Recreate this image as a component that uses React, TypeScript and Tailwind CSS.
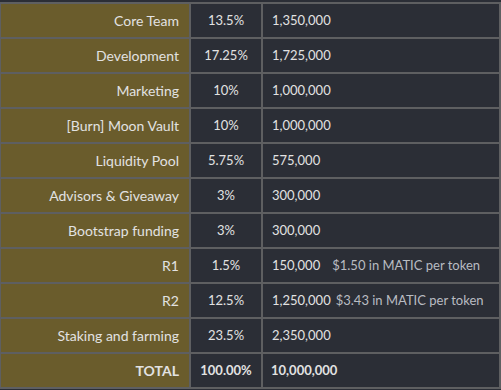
const rows: { name: string; pct: string; amount: string; note?: string; gap?: string }[] = [
  { name: "Core Team", pct: "13.5%", amount: "1,350,000" },
  { name: "Development", pct: "17.25%", amount: "1,725,000" },
  { name: "Marketing", pct: "10%", amount: "1,000,000" },
  { name: "[Burn] Moon Vault", pct: "10%", amount: "1,000,000" },
  { name: "Liquidity Pool", pct: "5.75%", amount: "575,000" },
  { name: "Advisors & Giveaway", pct: "3%", amount: "300,000" },
  { name: "Bootstrap funding", pct: "3%", amount: "300,000" },
  { name: "R1", pct: "1.5%", amount: "150,000", note: "$1.50 in MATIC per token", gap: "ml-[12px]" },
  { name: "R2", pct: "12.5%", amount: "1,250,000", note: "$3.43 in MATIC per token", gap: "ml-[5px]" },
  { name: "Staking and farming", pct: "23.5%", amount: "2,350,000" },
];

export default function App() {
  return (
    <main className="h-[390px] w-[501px] overflow-hidden bg-[#2b2e36] pt-[2px] font-['Lato',sans-serif] text-[14px] text-[#e2e2e2]">
      {/* Allocation table */}
      <div className="grid grid-cols-[188px_70px_236px] gap-[2px] bg-[#5e5f61] pl-[1px] pr-[2px] py-[2px]">
        {rows.map((r) => (
          <Row key={r.name} {...r} />
        ))}

        {/* Total */}
        <div className="flex h-[33px] items-center justify-end bg-[#6a5c2c] pr-[10px] font-bold">TOTAL</div>
        <div className="flex h-[33px] items-center justify-center bg-[#2b2e36] text-[13px] font-bold">100.00%</div>
        <div className="flex h-[33px] items-center bg-[#2b2e36] pl-[8px] text-[13px] font-bold">10,000,000</div>
      </div>
    </main>
  );
}

function Row({ name, pct, amount, note, gap }: { name: string; pct: string; amount: string; note?: string; gap?: string }) {
  return (
    <>
      <div className="flex h-[33px] items-center justify-end bg-[#6a5c2c] pr-[10px]">{name}</div>
      <div className="flex h-[33px] items-center justify-center bg-[#2b2e36] text-[13px]">{pct}</div>
      <div className="flex h-[33px] items-center bg-[#2b2e36] pl-[9px] text-[13px]">
        <span>{amount}</span>
        {note && <span className={`${gap} text-[#b9bcc2]`}>{note}</span>}
      </div>
    </>
  );
}
